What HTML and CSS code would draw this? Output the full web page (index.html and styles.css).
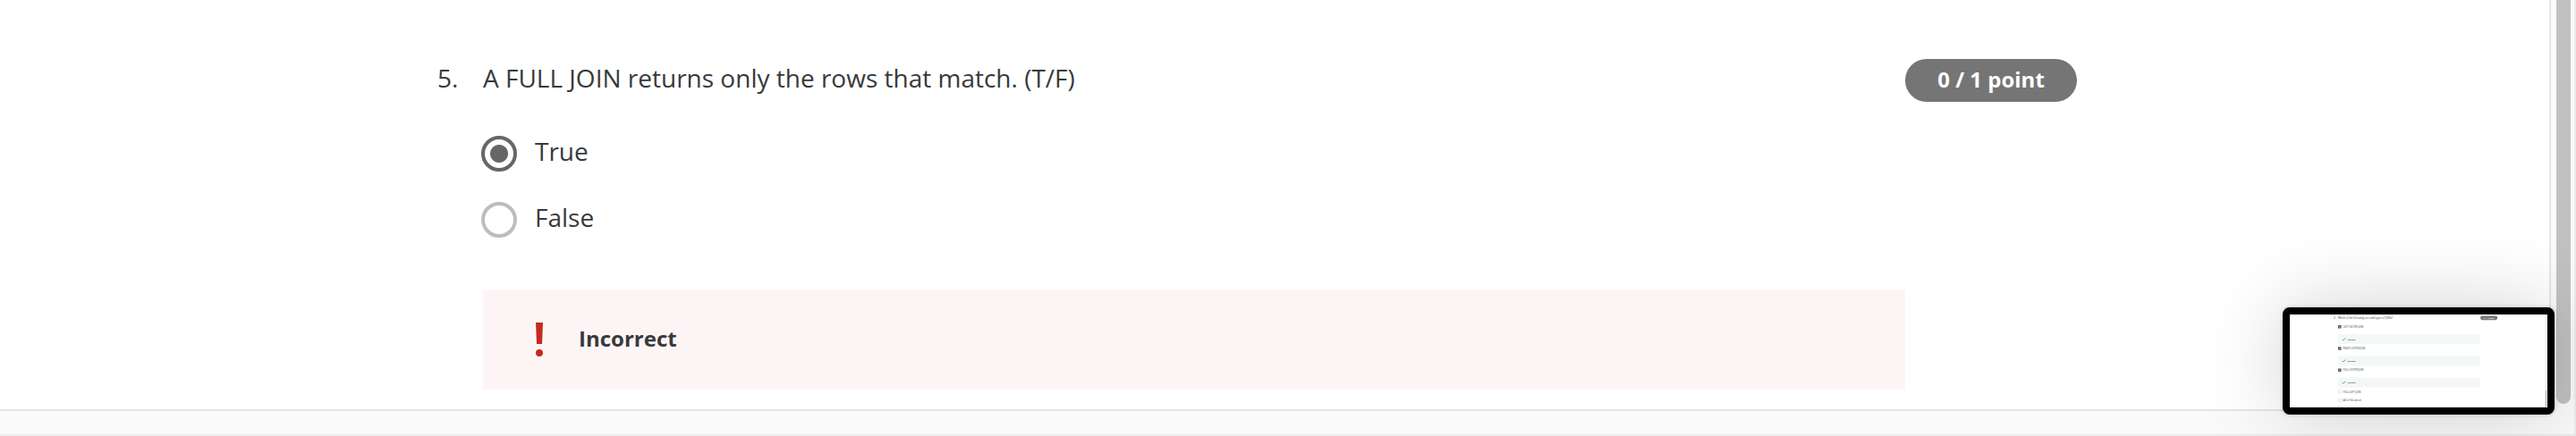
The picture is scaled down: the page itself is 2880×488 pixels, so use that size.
FILE: index.html
```html
<!DOCTYPE html>
<html lang="en">
<head>
<meta charset="utf-8">
<title>Quiz feedback</title>
<link rel="stylesheet" href="styles.css">
</head>
<body>
<div class="window">
  <main class="page">
    <div class="question">
      <span class="number">5.</span>
      <p class="prompt">A FULL JOIN returns only the rows that match. (T/F)</p>
      <span class="points">0 / 1 point</span>
    </div>
    <div class="options">
      <div class="option"><span class="radio checked"></span><span class="label">True</span></div>
      <div class="option"><span class="radio"></span><span class="label">False</span></div>
    </div>
    <div class="feedback incorrect">
      <svg class="bang" viewBox="0 0 8 38"><path d="M0 0H8L7 24H1Z"/><circle cx="4" cy="34" r="4"/></svg>
      <strong>Incorrect</strong>
    </div>
  </main>
  <div class="track"><div class="thumb"></div></div>
</div>
<aside class="preview">
  <div class="mini">
    <div class="question">
      <span class="number">4.</span>
      <p class="prompt">Which of the following are valid types of JOINs?</p>
      <span class="points">1 / 1 point</span>
    </div>
    <div class="choice"><svg class="box on" viewBox="0 0 36 36"><path d="M8 18L15 25L28 10"/></svg><span class="label">LEFT OUTER JOIN</span></div>
    <div class="feedback correct"><svg class="tick" viewBox="0 0 44 36"><path d="M3 19L15 31L41 4"/></svg><strong>Correct</strong></div>
    <div class="choice"><svg class="box on" viewBox="0 0 36 36"><path d="M8 18L15 25L28 10"/></svg><span class="label">RIGHT OUTER JOIN</span></div>
    <div class="feedback correct"><svg class="tick" viewBox="0 0 44 36"><path d="M3 19L15 31L41 4"/></svg><strong>Correct</strong></div>
    <div class="choice"><svg class="box on" viewBox="0 0 36 36"><path d="M8 18L15 25L28 10"/></svg><span class="label">FULL OUTER JOIN</span></div>
    <div class="feedback correct"><svg class="tick" viewBox="0 0 44 36"><path d="M3 19L15 31L41 4"/></svg><strong>Correct</strong></div>
    <div class="choice"><span class="box"></span><span class="label">FULL LEFT JOIN</span></div>
    <div class="choice last"><span class="box"></span><span class="label">All of the above</span></div>
  </div>
  <div class="mini-track"><div class="mini-thumb"></div></div>
</aside>
</body>
</html>
```

FILE: styles.css
```css
* { box-sizing: border-box; }
body {
  margin: 0;
  width: 2880px;
  height: 488px;
  overflow: hidden;
  position: relative;
  background: #fafafa;
  color: #373a3c;
  font-family: "Open Sans", sans-serif;
}
.window {
  display: grid;
  grid-template-columns: 2852px 1fr;
  height: 488px;
  border-right: 2px solid #ececec;
  border-bottom: 2px solid #ececec;
}
.page {
  height: 460px;
  padding-top: 66px;
  background: #fff;
  border-right: 2px solid #e6e6e6;
  border-bottom: 2px solid #e6e6e6;
}
.track { padding-left: 6px; }
.thumb {
  width: 16px;
  height: 452px;
  border-radius: 0 0 8px 8px;
  background: #c1c1c1;
}
.question {
  display: grid;
  grid-template-columns: 51px 1590px 192px;
  padding-left: 489px;
  height: 48px;
  line-height: 42px;
  font-size: 28px;
}
.prompt { margin: 0; white-space: nowrap; }
.points {
  height: 48px;
  border-radius: 24px;
  background: #757575;
  color: #fff;
  font-size: 24px;
  font-weight: 700;
  line-height: 46px;
  text-align: center;
}
.options {
  display: flex;
  flex-direction: column;
  gap: 34px;
  padding: 38px 0 0 538px;
}
.option { display: flex; gap: 20px; height: 40px; }
.radio {
  width: 40px;
  height: 40px;
  border: 4px solid #bdbdbd;
  border-radius: 50%;
}
.radio.checked {
  border-color: #666;
  background: radial-gradient(circle, #666 9.5px, #fff 10.5px);
}
.label { font-size: 28px; line-height: 34px; white-space: nowrap; }
.feedback {
  display: flex;
  align-items: center;
  width: 1590px;
  height: 112px;
  margin: 58px 0 0 540px;
  font-size: 24px;
}
.feedback strong { line-height: 32px; }
.incorrect { padding-left: 59px; gap: 40px; background: #fdf5f5; }
.incorrect strong { margin-top: -2px; }
.bang { width: 8px; height: 38px; fill: #c7291e; }

/* Floating preview of the previous question, overlaid on the page */
.preview {
  position: absolute;
  left: 2552px;
  top: 344px;
  width: 304px;
  height: 120px;
  overflow: hidden;
  border: 8px solid #000;
  border-radius: 8px;
  background: #fff;
  box-shadow: 0 0 90px rgba(0, 0, 0, .18), 0 0 4px rgba(0, 0, 0, .2);
  display: grid;
  grid-template: 104px / 288px;
}
.mini {
  grid-area: 1 / 1;
  width: 2880px;
  height: 1040px;
  padding-top: 14px;
  transform: scale(.1);
  transform-origin: 0 0;
}
.choice {
  display: flex;
  align-items: center;
  gap: 21px;
  height: 36px;
  margin: 90px 0 0 540px;
}
.mini .question + .choice { margin-top: 58px; }
.mini .choice.last { margin-top: 58px; }
.box {
  width: 36px;
  height: 36px;
  border: 4px solid #bdbdbd;
  border-radius: 4px;
}
.box.on { border: 0; background: #555; }
.box path, .tick path { fill: none; stroke: #fff; stroke-width: 5; }
.correct {
  margin-top: 64px;
  padding-left: 44px;
  gap: 18px;
  background: #f3f8f6;
}
.correct + .choice { margin-top: 30px; }
.tick { width: 44px; height: 36px; }
.tick path { stroke: #1d7c50; stroke-width: 7; }
.mini-track {
  grid-area: 1 / 1;
  justify-self: end;
  width: 3px;
  height: 104px;
  padding-top: 85px;
  background: #f8f8f8;
}
.mini-thumb { width: 1px; height: 18px; margin-left: 1px; background: #aaa; }
```
